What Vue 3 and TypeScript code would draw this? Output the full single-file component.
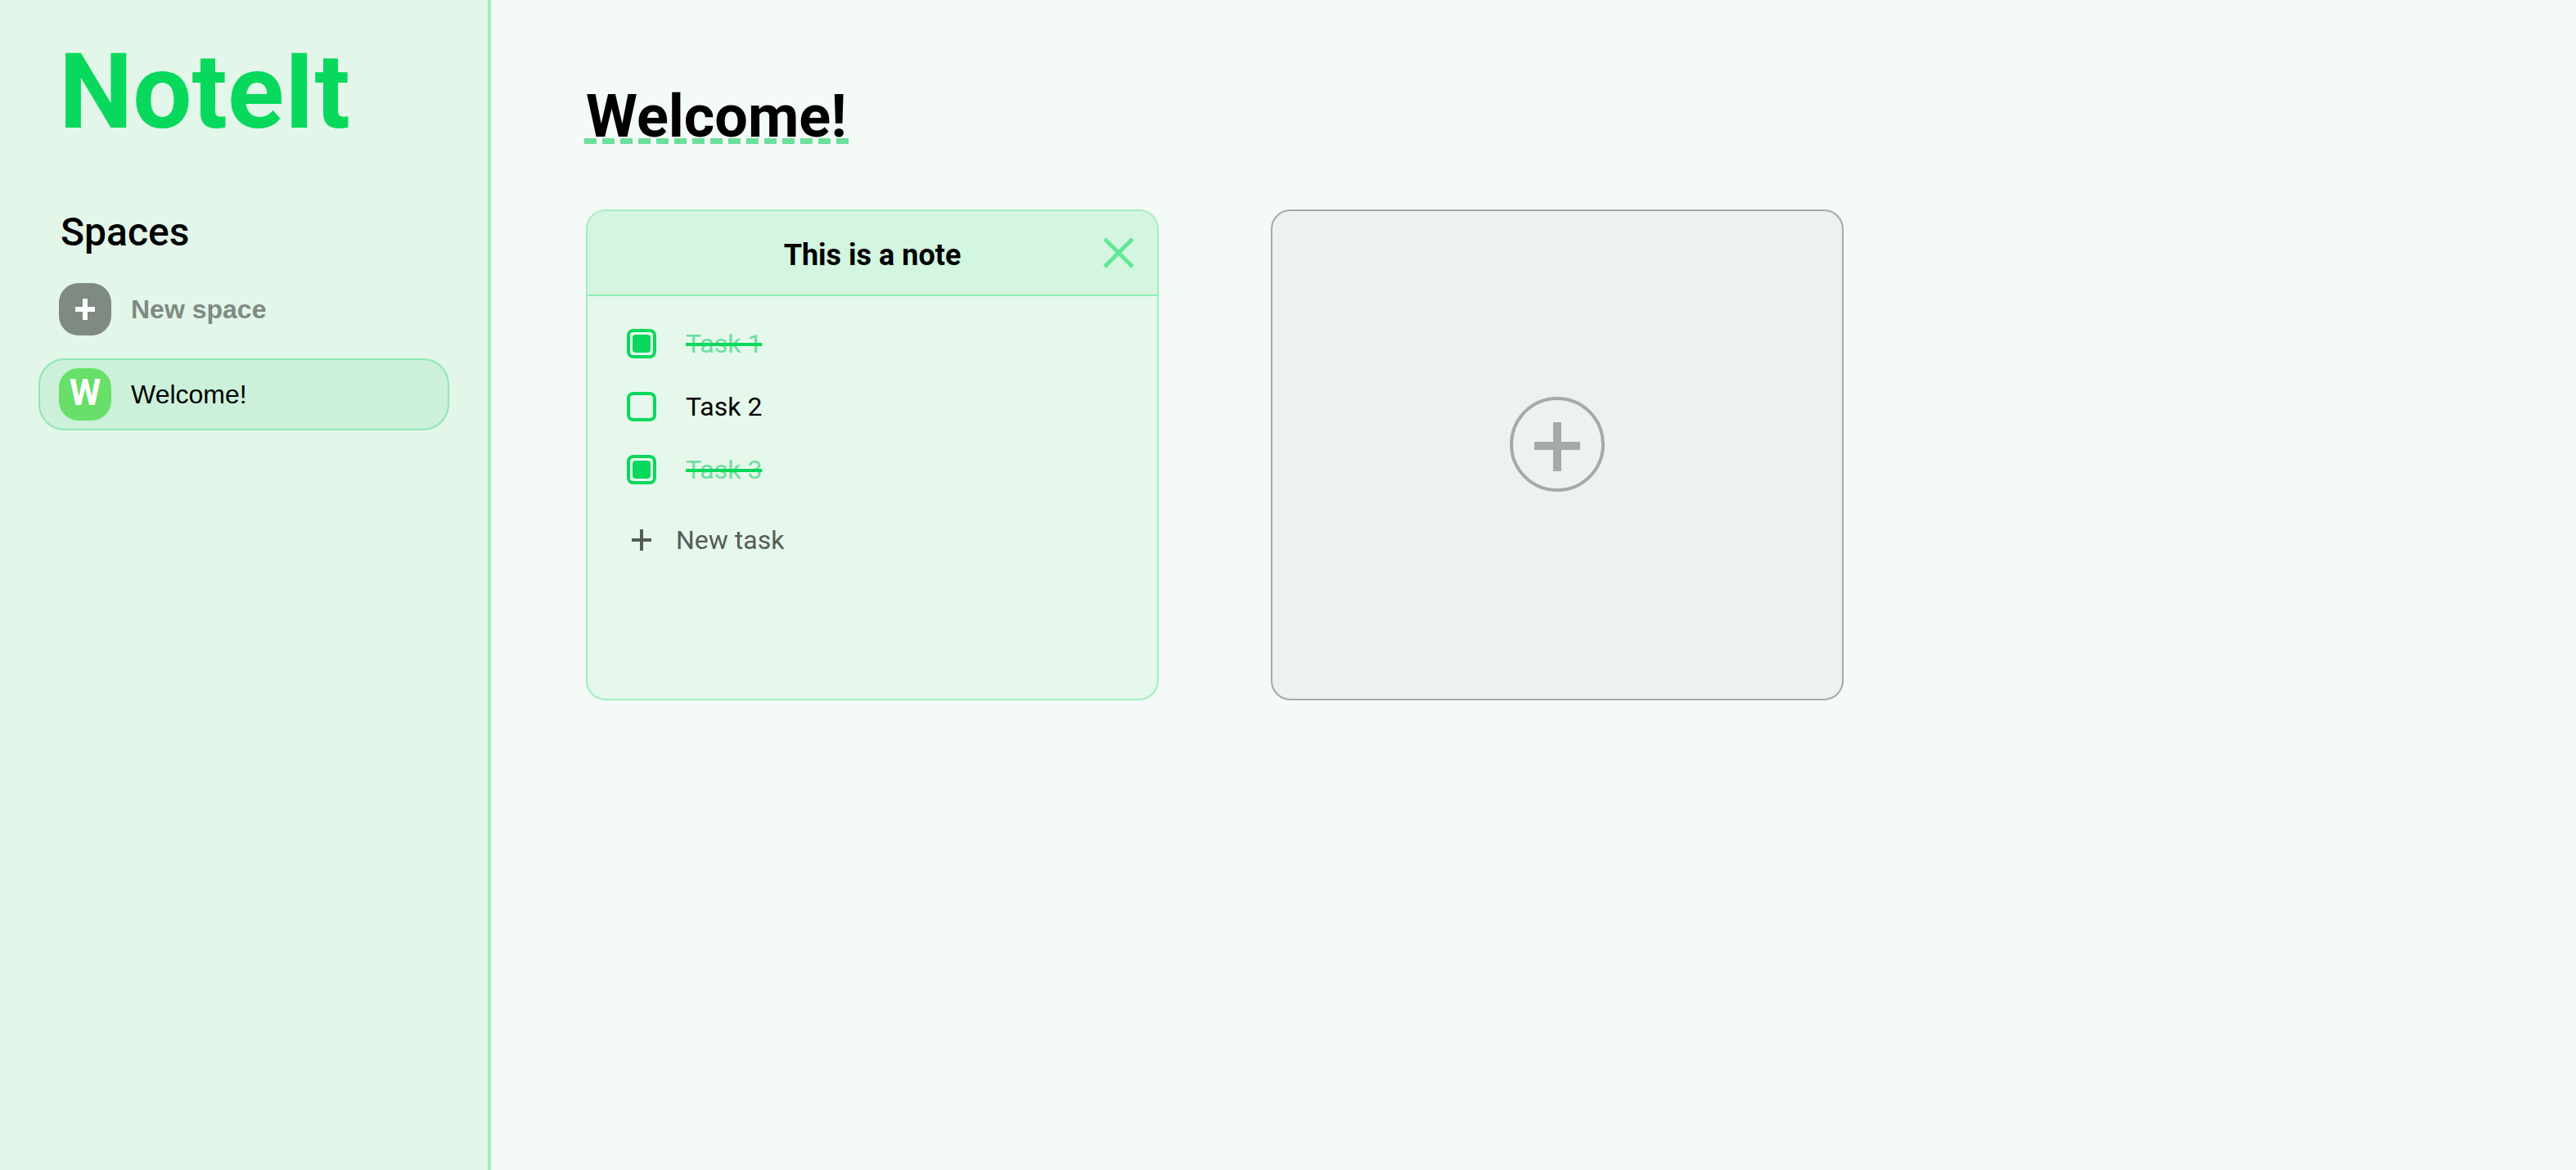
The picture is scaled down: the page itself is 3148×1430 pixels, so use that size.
<script setup lang="ts">
import { reactive } from 'vue'

interface Task {
  id: number
  label: string
  done: boolean
}

const tasks = reactive<Task[]>([
  { id: 1, label: 'Task 1', done: true },
  { id: 2, label: 'Task 2', done: false },
  { id: 3, label: 'Task 3', done: true },
])
</script>

<template>
  <div class="app">
    <aside class="sidebar">
      <div class="logo">NoteIt</div>
      <h2 class="spaces-title">Spaces</h2>
      <nav class="spaces">
        <button type="button" class="space space-new">
          <span class="badge badge-new">
            <svg width="24" height="26" viewBox="0 0 24 26" aria-hidden="true">
              <path d="M12 0V26M0 13H24" stroke="#fff" stroke-width="6" fill="none" />
            </svg>
          </span>
          <span>New space</span>
        </button>
        <button type="button" class="space space-active">
          <span class="badge badge-letter">W</span>
          <span>Welcome!</span>
        </button>
      </nav>
    </aside>

    <main class="content">
      <h1 class="title">Welcome!</h1>
      <div class="notes">
        <section class="note">
          <header class="note-head">
            <h3 class="note-title">This is a note</h3>
            <button type="button" class="close" aria-label="Delete note">
              <svg width="38" height="38" viewBox="0 0 38 38" aria-hidden="true">
                <path d="M2 2L36 36M36 2L2 36" stroke="#62e896" stroke-width="5" fill="none" />
              </svg>
            </button>
          </header>
          <ul class="tasks">
            <li v-for="task in tasks" :key="task.id">
              <label class="task">
                <input v-model="task.done" type="checkbox" class="check" />
                <span class="task-label" :class="{ done: task.done }">{{ task.label }}</span>
              </label>
            </li>
          </ul>
          <button type="button" class="new-task">
            <svg width="24" height="26" viewBox="0 0 24 26" aria-hidden="true">
              <path d="M12 0V26M0 13H24" stroke="#555b56" stroke-width="4" fill="none" />
            </svg>
            <span>New task</span>
          </button>
        </section>

        <button type="button" class="note-new" aria-label="New note">
          <svg width="116" height="116" viewBox="0 0 116 116" aria-hidden="true">
            <circle cx="58" cy="58" r="56" fill="none" stroke="#a4aaa5" stroke-width="4" />
            <path d="M58 31V91M30 60H86" stroke="#a4aaa5" stroke-width="10" fill="none" />
          </svg>
        </button>
      </div>
    </main>
  </div>
</template>

<style>
body {
  margin: 0;
}
</style>

<style scoped>
.app {
  display: flex;
  min-height: 100vh;
  background: #f4faf6;
  color: #000;
  font-family: Roboto, 'Liberation Sans', sans-serif;
  font-size: 32px;
}

button {
  margin: 0;
  padding: 0;
  border: none;
  background: none;
  color: inherit;
  font: inherit;
  cursor: pointer;
}

svg {
  display: block;
}

.sidebar {
  box-sizing: border-box;
  flex: 0 0 600px;
  padding: 48px 47px;
  border-right: 4px solid #9deebd;
  background: #e2f6e9;
}

.logo {
  padding-left: 25px;
  color: #08d95c;
  font-size: 128px;
  font-weight: 700;
  line-height: 128px;
}

.spaces-title {
  margin: 80px 0 22px;
  padding-left: 27px;
  font-size: 48px;
  font-weight: 500;
  line-height: 56px;
}

.spaces {
  display: flex;
  flex-direction: column;
  gap: 16px;
}

.space {
  display: flex;
  align-items: center;
  gap: 24px;
  box-sizing: border-box;
  height: 88px;
  padding: 0 23px;
  border: 2px solid transparent;
  border-radius: 32px;
  font-family: 'Liberation Sans', Arial, sans-serif;
}

.space-new {
  color: #7f8a82;
  font-weight: 700;
}

.space-active {
  border-color: #8ee8b4;
  background: #ccf0da;
}

.badge {
  display: flex;
  align-items: center;
  justify-content: center;
  width: 64px;
  height: 64px;
  border-radius: 24px;
}

.badge-letter {
  align-items: flex-start;
  background: #67df69;
  color: #fff;
  font-family: Roboto, 'Liberation Sans', sans-serif;
  font-size: 44px;
  font-weight: 700;
  line-height: 60px;
}

.badge-new {
  background: #7f8a82;
}

.content {
  flex: 1;
  min-width: 0;
  padding: 115px 114px 80px;
}

.title {
  width: fit-content;
  margin: 0 0 80px;
  padding: 0 2px 5px;
  background: repeating-linear-gradient(90deg, #6bdf9b 0 15px, transparent 15px 22px) left bottom / 100% 7px no-repeat;
  font-size: 72px;
  font-weight: 700;
  line-height: 56px;
}

.notes {
  display: flex;
  flex-wrap: wrap;
  gap: 80px 137px;
  padding-left: 2px;
}

.note,
.note-new {
  box-sizing: border-box;
  width: 700px;
  height: 600px;
  border: 2px solid #a0eec0;
  border-radius: 24px;
  overflow: hidden;
}

.note {
  background: #e6f8eb;
}

.note-head {
  display: grid;
  grid-template-columns: 1fr auto 1fr;
  align-items: center;
  height: 102px;
  padding: 0 28px;
  border-bottom: 2px solid #8eedb5;
  background: #d4f5e0;
}

.note-title {
  grid-column: 2;
  margin: 0;
  padding-top: 6px;
  font-size: 36px;
  font-weight: 700;
  line-height: 44px;
}

.close {
  justify-self: end;
}

.tasks {
  display: flex;
  flex-direction: column;
  gap: 37px;
  margin: 0;
  padding: 38px 48px 0;
  list-style: none;
}

.task {
  display: flex;
  align-items: center;
  gap: 36px;
  height: 40px;
}

.check {
  appearance: none;
  display: grid;
  place-content: center;
  box-sizing: border-box;
  flex: none;
  width: 36px;
  height: 36px;
  margin: 0;
  border: 4px solid #08d95c;
  border-radius: 8px;
}

.check:checked::before {
  content: '';
  width: 22px;
  height: 22px;
  border-radius: 4px;
  background: #08d95c;
}

.task-label {
  line-height: 40px;
}

.done {
  color: #6bdf9b;
  text-decoration: line-through 4px #08d95c;
}

.new-task {
  display: flex;
  align-items: center;
  gap: 30px;
  margin: 46px 0 0 54px;
  color: #555b56;
  line-height: 40px;
}

.note-new {
  display: flex;
  align-items: center;
  justify-content: center;
  padding-bottom: 26px;
  border-color: #a4aaa5;
  background: #ecf2ee;
}
</style>
